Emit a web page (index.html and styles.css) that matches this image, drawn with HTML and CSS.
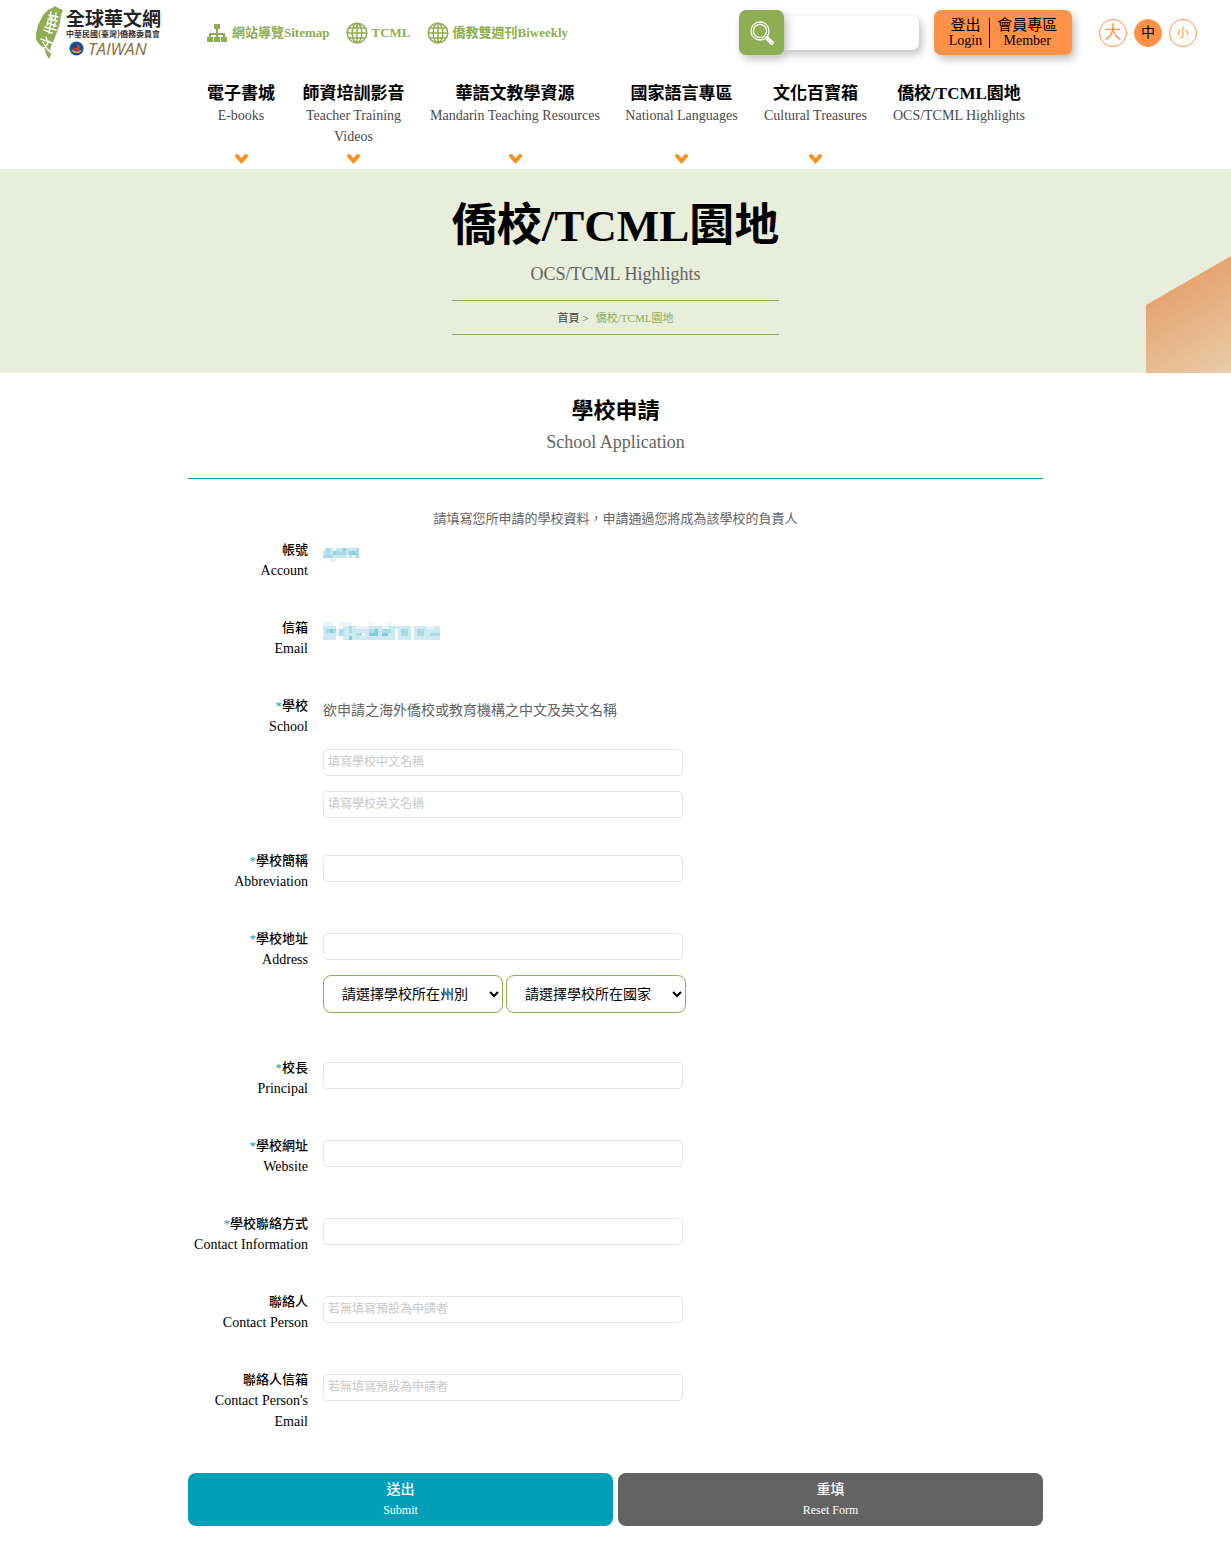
FILE: index.html
```html
<!DOCTYPE html>
<html lang="zh-Hant">
<head>
<meta charset="utf-8">
<meta name="viewport" content="width=device-width, initial-scale=1">
<title>學校申請 - 全球華文網</title>
<link rel="stylesheet" href="styles.css">
</head>
<body>
<header class="site-header">
  <div class="topbar">
    <a class="logo" href="#" aria-label="全球華文網">
      <svg class="logo-island" viewBox="0 0 30 54" aria-hidden="true">
        <path fill="#8fad52" d="M18 2l3-2 3 2 5 2-2 5-1 8-3 9-3 8-3 6-1 5 1 4-2 4-3-5-1-5-5-4-4-5 0-6 2-9 5-10 5-5z"/>
        <g fill="none" stroke="#fff" stroke-width="1.5" stroke-linecap="round">
          <path d="M15 9l9 2M17 6l-1 6M22 7l-1 7M14 13l9 2M13 17l9 3M14 15l-1 4M21 17l-1 4M11 21l11 3M18 11l-3 16M10 24l8 3"/>
          <path d="M12 31l1 3M7 33l11 4M15 35q-3 7-8 7M9 36q3 6 7 10"/>
        </g>
      </svg>
      <span class="logo-words">
        <span class="logo-name">全球華文網</span>
        <span class="logo-org">中華民國(臺灣)僑務委員會</span>
        <span class="logo-country">
          <svg class="logo-emblem" viewBox="0 0 16 16" aria-hidden="true">
            <circle cx="8" cy="8" r="7.5" fill="#15558e"/>
            <path fill="#cf3546" d="M5 4l7 1-1 5H5z"/>
            <path fill="#173a78" d="M5 4l3 .5V7H5z"/>
            <path d="M3 10q5 4 10 0M5 12h6" fill="none" stroke="#e5a53a" stroke-width="1.5"/>
          </svg>
          <span>TAIWAN</span>
        </span>
      </span>
    </a>
    <nav class="quick-links" aria-label="快速連結">
      <a href="#">
        <svg class="icon" viewBox="0 0 22 22" aria-hidden="true"><path fill="currentColor" d="M8 2h6v5h-2v4h7v4h2v5h-6v-5h2v-2h-5v2h2v5H8v-5h2v-2H5v2h2v5H1v-5h2v-4h7V7H8z"/></svg>
        網站導覽Sitemap</a>
      <a href="#">
        <svg class="icon" viewBox="0 0 22 22" aria-hidden="true"><g fill="none" stroke="currentColor" stroke-width="1.5"><circle cx="11" cy="11" r="9.8"/><ellipse cx="11" cy="11" rx="4.8" ry="9.8"/><path d="M11 1v20M1 11h20M3 6h16M3 16h16"/></g></svg>
        TCML</a>
      <a href="#">
        <svg class="icon" viewBox="0 0 22 22" aria-hidden="true"><g fill="none" stroke="currentColor" stroke-width="1.5"><circle cx="11" cy="11" r="9.8"/><ellipse cx="11" cy="11" rx="4.8" ry="9.8"/><path d="M11 1v20M1 11h20M3 6h16M3 16h16"/></g></svg>
        僑教雙週刊Biweekly</a>
    </nav>
    <form class="search" role="search">
      <button type="submit" aria-label="搜尋">
        <svg viewBox="0 0 24 24" aria-hidden="true"><g fill="none" stroke="#fff" stroke-width="1.3"><circle cx="10" cy="10" r="9"/><circle cx="10" cy="10" r="6.6"/><path d="M15.3 17.2l1.9-1.9 5.6 5.4a1.3 1.3 0 0 1-2 2zM17 17l4.5 4.5"/></g></svg>
      </button>
      <input type="search" aria-label="搜尋">
    </form>
    <div class="member">
      <a href="#">登出<span>Login</span></a>
      <a href="#">會員專區<span>Member</span></a>
    </div>
    <div class="font-sizes">
      <button type="button" class="size-large">大</button>
      <button type="button" class="size-medium" aria-pressed="true">中</button>
      <button type="button" class="size-small">小</button>
    </div>
  </div>
  <nav class="main-nav" aria-label="主選單">
    <a href="#"><strong>電子書城</strong><span>E-books</span><svg class="chevron" viewBox="0 0 13 11" aria-hidden="true"><path d="M2 3l4.500 5 4.500-5"/></svg></a>
    <a href="#"><strong>師資培訓影音</strong><span>Teacher Training Videos</span><svg class="chevron" viewBox="0 0 13 11" aria-hidden="true"><path d="M2 3l4.500 5 4.500-5"/></svg></a>
    <a href="#"><strong>華語文教學資源</strong><span>Mandarin Teaching Resources</span><svg class="chevron" viewBox="0 0 13 11" aria-hidden="true"><path d="M2 3l4.500 5 4.500-5"/></svg></a>
    <a href="#"><strong>國家語言專區</strong><span>National Languages</span><svg class="chevron" viewBox="0 0 13 11" aria-hidden="true"><path d="M2 3l4.500 5 4.500-5"/></svg></a>
    <a href="#"><strong>文化百寶箱</strong><span>Cultural Treasures</span><svg class="chevron" viewBox="0 0 13 11" aria-hidden="true"><path d="M2 3l4.500 5 4.500-5"/></svg></a>
    <a href="#"><strong>僑校/TCML園地</strong><span>OCS/TCML Highlights</span></a>
  </nav>
</header>

<section class="hero">
  <div class="hero-inner">
    <h1>僑校/TCML園地</h1>
    <p>OCS/TCML Highlights</p>
    <nav class="breadcrumb" aria-label="麵包屑"><a href="#">首頁</a><span>&gt;</span><a href="#" class="current" aria-current="page">僑校/TCML園地</a></nav>
  </div>
</section>

<main class="content">
  <header class="page-title">
    <h2>學校申請</h2>
    <p>School Application</p>
  </header>
  <p class="intro">請填寫您所申請的學校資料，申請通過您將成為該學校的負責人</p>
  <form class="application">
    <div class="row">
      <div class="label">帳號<span>Account</span></div>
      <div class="field">
        <svg class="masked" width="39" height="21" viewBox="0 0 12 6" preserveAspectRatio="none" shape-rendering="crispEdges" role="img" aria-label="帳號已遮蔽">
          <path fill="#c4e7ec" d="M0 1h11v3H0z"/>
          <path fill="#e3f4f6" d="M0 1h1v1H0zM2 4h2v1H2zM7 3h1v1H7zM9 3h1v1H9z"/>
          <path fill="#a9dbe2" d="M1 1h1v2H1zM0 3h3v1H0zM4 2h3v1H4zM10 1h1v3h-1z"/>
          <path fill="#8fd2de" d="M3 2h1v1H3zM6 1h1v1H6zM8 2h2v1H8z"/>
          <path fill="#fff" d="M3 1h1v1H3z"/>
        </svg>
      </div>
    </div>
    <div class="row">
      <div class="label">信箱<span>Email</span></div>
      <div class="field">
        <svg class="masked" width="117" height="21" viewBox="0 0 36 6" preserveAspectRatio="none" shape-rendering="crispEdges" role="img" aria-label="信箱已遮蔽">
          <path fill="#cdeaf0" d="M0 1h4v4H0zM6 1h21v4H6zM28 1h8v4h-8z"/>
          <path fill="#e7f5f8" d="M0 0h3v1H0zM5 0h3v1H5zM8 0h1v1H8zM14 0h1v1h-1zM20 0h1v1h-1zM4 2h1v2H4zM10 1h4v1h-4zM18 1h2v1h-2zM32 1h2v1h-2z"/>
          <path fill="#a9dbe2" d="M1 2h3v1H1zM5 2h1v2H5zM8 1h1v2H8zM10 3h2v1h-2zM14 2h3v1h-3zM18 2h3v1h-3zM24 2h2v2h-2zM29 2h2v2h-2zM33 3h3v1h-3z"/>
          <path fill="#83cbdc" d="M2 2h1v1H2zM8 4h1v1H8zM14 3h2v1h-2zM16 2h1v2h-1zM18 3h2v1h-2z"/>
          <path fill="#fff" d="M12 3h1v1h-1zM22 2h1v3h-1zM27 1h1v4h-1z"/>
        </svg>
      </div>
    </div>
    <div class="row">
      <label class="label" for="school-zh"><i>*</i>學校<span>School</span></label>
      <div class="field">
        <p class="hint">欲申請之海外僑校或教育機構之中文及英文名稱</p>
        <input id="school-zh" type="text" placeholder="填寫學校中文名稱">
        <input type="text" placeholder="填寫學校英文名稱" aria-label="學校英文名稱">
      </div>
    </div>
    <div class="row">
      <label class="label" for="abbr"><i>*</i>學校簡稱<span>Abbreviation</span></label>
      <div class="field"><input id="abbr" type="text"></div>
    </div>
    <div class="row">
      <label class="label" for="address"><i>*</i>學校地址<span>Address</span></label>
      <div class="field">
        <input id="address" type="text">
        <div class="selects">
          <select aria-label="學校所在州別"><option>請選擇學校所在州別</option></select>
          <select aria-label="學校所在國家"><option>請選擇學校所在國家</option></select>
        </div>
      </div>
    </div>
    <div class="row">
      <label class="label" for="principal"><i>*</i>校長<span>Principal</span></label>
      <div class="field"><input id="principal" type="text"></div>
    </div>
    <div class="row">
      <label class="label" for="website"><i>*</i>學校網址<span>Website</span></label>
      <div class="field"><input id="website" type="text"></div>
    </div>
    <div class="row">
      <label class="label" for="contact"><i>*</i>學校聯絡方式<span>Contact Information</span></label>
      <div class="field"><input id="contact" type="text"></div>
    </div>
    <div class="row">
      <label class="label" for="person">聯絡人<span>Contact Person</span></label>
      <div class="field"><input id="person" type="text" placeholder="若無填寫預設為申請者"></div>
    </div>
    <div class="row">
      <label class="label" for="person-email">聯絡人信箱<span>Contact Person's Email</span></label>
      <div class="field"><input id="person-email" type="text" placeholder="若無填寫預設為申請者"></div>
    </div>
    <div class="actions">
      <button type="submit">送出<span>Submit</span></button>
      <button type="reset">重填<span>Reset Form</span></button>
    </div>
  </form>
</main>
</body>
</html>
```
FILE: styles.css
```css
:root {
  --green: #8fad52;
  --orange: #ff9248;
  --teal: #009fb9;
  --gray: #636363;
}

* { box-sizing: border-box; }

body {
  margin: 0;
  background: #fff;
  color: #000;
  font: 14px/21px "Liberation Serif", "Noto Sans CJK TC", serif;
}

a { color: inherit; text-decoration: none; }
h1, h2, p { margin: 0; }
button, input, select { font: inherit; color: inherit; }
svg { flex: none; }

/* Top bar */
.topbar {
  display: flex;
  align-items: center;
  height: 65px;
  padding: 0 34px;
}

.logo { display: flex; gap: 2px; width: 129px; }
.logo-island { width: 30px; height: 54px; }
.logo-words { display: flex; flex-direction: column; white-space: nowrap; }
.logo-name {
  color: #222;
  font-size: 19px;
  line-height: 23px;
  font-family: "Noto Sans CJK TC", sans-serif;
  font-weight: 700;
}
.logo-org {
  color: #333;
  font-size: 8px;
  line-height: 10px;
  font-family: "Noto Sans CJK TC", sans-serif;
  font-weight: 700;
}
.logo-country {
  display: flex;
  align-items: center;
  gap: 4px;
  padding-left: 3px;
  color: #8a6d35;
  font: italic 17px/20px "Open Sans", sans-serif;
}
.logo-emblem { width: 15px; height: 15px; }

.quick-links {
  display: flex;
  gap: 16px;
  margin-left: 43px;
  color: var(--green);
  font-size: 13px;
  font-weight: 700;
  white-space: nowrap;
}
.quick-links a { display: flex; align-items: center; gap: 4px; }
.icon { width: 22px; height: 22px; }

.search { display: flex; align-items: center; margin-left: auto; }
.search button {
  z-index: 1;
  display: grid;
  place-items: center;
  width: 45px;
  height: 45px;
  padding: 0;
  border: 0;
  border-radius: 7px;
  background: var(--green);
  box-shadow: 3px 4px 8px rgba(0, 0, 0, .25);
}
.search svg { width: 24px; height: 24px; }
.search input {
  width: 135px;
  height: 34px;
  padding: 0 8px;
  border: 0;
  border-radius: 0 7px 7px 0;
  background: #fff;
  box-shadow: 3px 4px 8px rgba(0, 0, 0, .25);
}

.member {
  display: flex;
  align-items: center;
  justify-content: center;
  width: 138px;
  height: 45px;
  margin-left: 15px;
  border-radius: 7px;
  background: var(--orange);
  box-shadow: 3px 4px 8px rgba(0, 0, 0, .25);
  font-size: 15px;
  line-height: 15px;
  text-align: center;
}
.member a { padding: 0 7px; }
.member a + a { border-left: 1px solid #000; }
.member span { display: block; font-size: 14px; }

.font-sizes { display: flex; gap: 7px; margin-left: 27px; }
.font-sizes button {
  width: 28px;
  height: 28px;
  padding: 0;
  border: 1px solid var(--orange);
  border-radius: 50%;
  background: #fff;
  color: var(--orange);
  line-height: 24px;
}
.font-sizes .size-large { font-size: 17px; }
.font-sizes .size-medium { background: var(--orange); color: #000; }
.font-sizes .size-small { font-size: 12px; }

/* Main menu */
.main-nav {
  display: grid;
  grid-template-columns: 72px 105px 170px 115px 105px 134px;
  justify-content: center;
  gap: 24px;
  padding: 17px 0 5px;
  text-align: center;
}
.main-nav a { display: flex; flex-direction: column; align-items: center; }
.main-nav strong { font-size: 17px; line-height: 23px; white-space: nowrap; }
.main-nav span { margin-bottom: 6px; color: #4a4a4a; }
.chevron {
  width: 13px;
  height: 11px;
  margin-top: auto;
  fill: none;
  stroke: #ff9020;
  stroke-width: 4;
  stroke-linecap: round;
}

/* Banner */
.hero {
  position: relative;
  display: flex;
  justify-content: center;
  padding: 30px 16px 38px;
  background: #e8eddc;
  text-align: center;
}
.hero::after {
  content: "";
  position: absolute;
  right: 0;
  bottom: 0;
  width: 85px;
  height: 117px;
  background: linear-gradient(150deg, #e5a26d 25%, #e8cda9);
  clip-path: polygon(0 49px, 100% 0, 100% 100%, 0 100%);
}
.hero h1 { font-size: 45px; line-height: 54px; }
.hero p {
  margin: 10px 0 15px;
  color: var(--gray);
  font-size: 18px;
  line-height: 22px;
}
.breadcrumb {
  display: flex;
  justify-content: center;
  padding: 7px 0 5px;
  border: solid var(--green);
  border-width: 1px 0;
  color: #444;
  font-size: 11px;
}
.breadcrumb span { margin: 0 7px 0 3px; }
.breadcrumb .current { color: var(--green); }

/* Page body */
.content {
  max-width: 855px;
  margin: 0 auto;
  padding: 23px 0 42px;
}
.page-title {
  padding-bottom: 25px;
  border-bottom: 1px solid var(--teal);
  text-align: center;
}
.page-title h2 { font-size: 22px; line-height: 30px; }
.page-title p {
  margin-top: 5px;
  color: var(--gray);
  font-size: 18px;
  line-height: 22px;
}
.intro {
  margin: 29px 0 10px;
  color: var(--gray);
  font-size: 13px;
  text-align: center;
}

.row {
  display: grid;
  grid-template-columns: 120px 1fr;
  gap: 15px;
  padding-bottom: 32px;
}
.label {
  padding-bottom: 4px;
  font-size: 13px;
  font-weight: 500;
  text-align: right;
}
.label span { display: block; font-size: 14px; font-weight: 400; }
.label i { color: var(--teal); font-style: normal; }
.field {
  display: flex;
  flex-direction: column;
  align-items: flex-start;
  gap: 15px;
  padding-top: 5px;
}
.hint { margin-bottom: 13px; color: var(--gray); }
.field input {
  width: 100%;
  max-width: 360px;
  height: 27px;
  padding: 0 4px;
  border: 1px solid #e5e5e5;
  border-radius: 4px;
  font-size: 12px;
}
.field input::placeholder { color: #c8c8c8; }
.selects { display: flex; gap: 3px; padding-bottom: 12px; }
.selects select {
  width: 180px;
  height: 38px;
  padding: 0 0 0 14px;
  border: 1px solid var(--green);
  border-radius: 8px;
  background: #fff;
}

.actions { display: flex; gap: 5px; padding-top: 5px; }
.actions button {
  flex: 1;
  height: 53px;
  padding: 0;
  border: 0;
  border-radius: 8px;
  background: var(--teal);
  color: #fff;
  font-weight: 500;
  line-height: 20px;
}
.actions button[type="reset"] { background: var(--gray); }
.actions span { display: block; font-size: 12px; }
```
